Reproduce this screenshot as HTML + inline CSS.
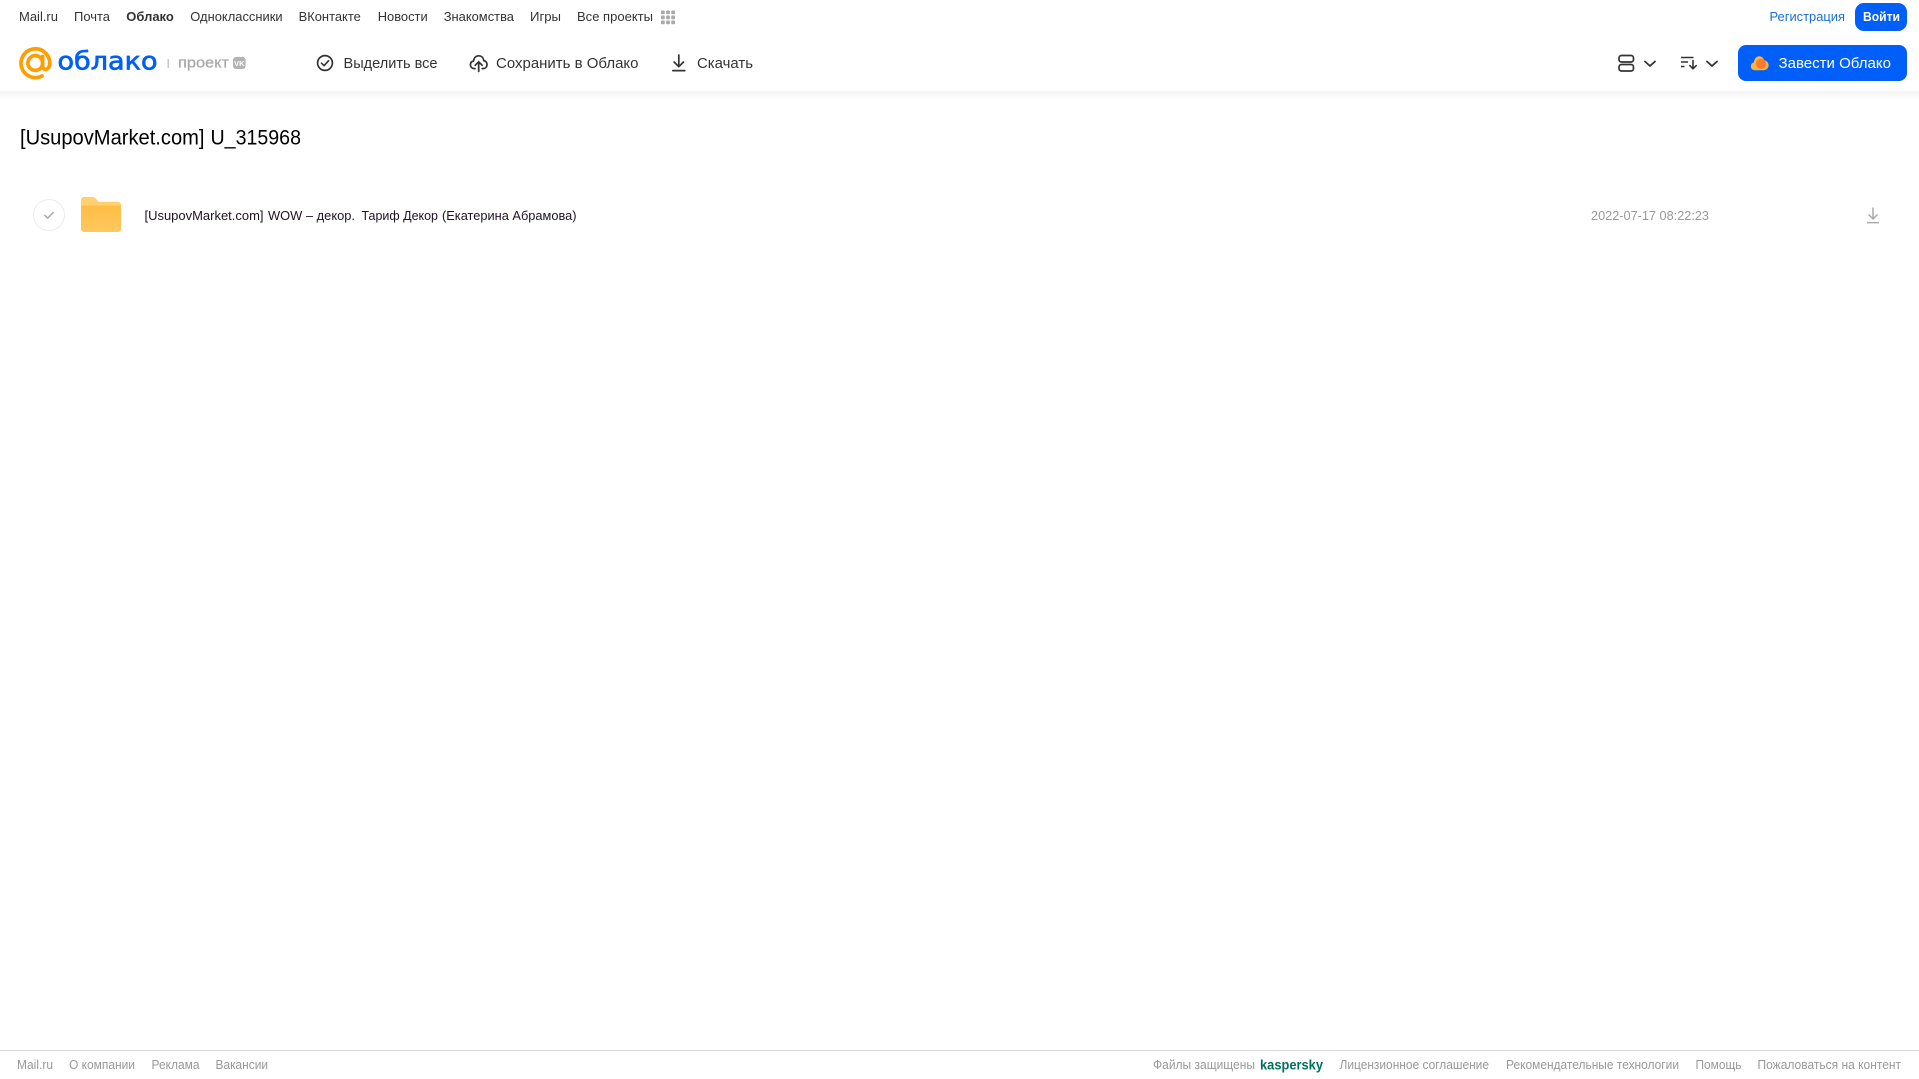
<!DOCTYPE html>
<html lang="ru">
<head>
<meta charset="utf-8">
<title>[UsupovMarket.com] U_315968</title>
<style>
html,body{margin:0;padding:0;width:1919px;height:1079px;overflow:hidden;background:#fff}
svg{display:block;position:absolute;left:0;top:0}
text{font-family:"Liberation Sans",sans-serif;white-space:pre}
.n{font-size:13px;fill:#333}
.a{font-size:15px;fill:#333}
.f{font-size:12.5px;fill:#999}
</style>
</head>
<body>
<svg width="1919" height="1079" viewBox="0 0 1919 1079" xmlns="http://www.w3.org/2000/svg">
<defs>
<linearGradient id="sh" x1="0" y1="0" x2="0" y2="1"><stop offset="0" stop-color="#f4f4f4"/><stop offset="1" stop-color="#fff"/></linearGradient>
<linearGradient id="fo" x1="0" y1="0" x2="0" y2="1"><stop offset="0" stop-color="#ffbd45"/><stop offset="1" stop-color="#ffc85f"/></linearGradient>
</defs>
<rect x="0" y="91" width="1919" height="9" fill="url(#sh)"/>

<!-- top nav -->
<text class="n" x="19" y="21" textLength="39" lengthAdjust="spacingAndGlyphs">Mail.ru</text>
<text class="n" x="74" y="21" textLength="36" lengthAdjust="spacingAndGlyphs">Почта</text>
<text class="n" x="126.3" y="21" textLength="47.5" lengthAdjust="spacingAndGlyphs" font-weight="700">Облако</text>
<text class="n" x="190.3" y="21" textLength="92.3" lengthAdjust="spacingAndGlyphs">Одноклассники</text>
<text class="n" x="298.6" y="21" textLength="62.2" lengthAdjust="spacingAndGlyphs">ВКонтакте</text>
<text class="n" x="377.7" y="21" textLength="50" lengthAdjust="spacingAndGlyphs">Новости</text>
<text class="n" x="443.7" y="21" textLength="70.3" lengthAdjust="spacingAndGlyphs">Знакомства</text>
<text class="n" x="530" y="21" textLength="31" lengthAdjust="spacingAndGlyphs">Игры</text>
<text class="n" x="577" y="21" textLength="76" lengthAdjust="spacingAndGlyphs">Все проекты</text>
<g fill="#aaa">
<rect x="661" y="10.500" width="3.800" height="3.800" rx=".8"/><rect x="666.100" y="10.500" width="3.800" height="3.800" rx=".8"/><rect x="671.200" y="10.500" width="3.800" height="3.800" rx=".8"/>
<rect x="661" y="15.500" width="3.800" height="3.800" rx=".8"/><rect x="666.100" y="15.500" width="3.800" height="3.800" rx=".8"/><rect x="671.200" y="15.500" width="3.800" height="3.800" rx=".8"/>
<rect x="661" y="20.500" width="3.800" height="3.800" rx=".8"/><rect x="666.100" y="20.500" width="3.800" height="3.800" rx=".8"/><rect x="671.200" y="20.500" width="3.800" height="3.800" rx=".8"/>
</g>
<text x="1769.500" y="21" font-size="13" fill="#1a6fd8" textLength="75.500" lengthAdjust="spacingAndGlyphs">Регистрация</text>
<rect x="1855" y="3" width="52" height="28" rx="9" fill="#005ff9"/>
<text x="1863" y="21" font-size="13" font-weight="700" fill="#fff" textLength="37" lengthAdjust="spacingAndGlyphs">Войти</text>

<!-- logo -->
<path d="M42.600 56.500v9.300c0 5.400 7.200 5 7.200-3A14.400 14.400 0 1 0 42 76" fill="none" stroke="#ff9e00" stroke-width="3.700" stroke-linecap="round"/>
<circle cx="35.300" cy="63" r="7.400" fill="none" stroke="#ff9e00" stroke-width="3.700"/>
<text x="57.500" y="69.500" font-size="24.500" style="font-family:'DejaVu Sans',sans-serif" fill="#005ff9" stroke="#005ff9" stroke-width=".7" textLength="100" lengthAdjust="spacingAndGlyphs">облако</text>
<rect x="167.600" y="59" width="1.200" height="9" fill="#bbb"/>
<text x="178" y="67.700" font-size="15" fill="#a6a6a6" stroke="#a6a6a6" stroke-width=".2" textLength="51" lengthAdjust="spacingAndGlyphs">проект</text>
<rect x="233" y="57" width="12.600" height="12" rx="3" fill="#b3b3b3"/>
<text x="239.300" y="65.800" font-size="7.500" font-weight="700" fill="#fff" text-anchor="middle">VK</text>

<!-- toolbar -->
<circle cx="325" cy="63" r="7.400" fill="none" stroke="#333" stroke-width="1.700"/>
<path d="M321.500 63.200l2.600 2.500 4.500-5" fill="none" stroke="#333" stroke-width="1.600" stroke-linecap="round" stroke-linejoin="round"/>
<text class="a" x="343.500" y="68" textLength="94" lengthAdjust="spacingAndGlyphs">Выделить все</text>

<path d="M475 68.600h-.6c-2.600 0-4-1.800-4-3.800 0-1.900 1.200-3.400 3.100-3.800.5-3.300 2.500-5.200 5.200-5.200 2.800 0 4.700 2 5.100 4.800 1.900.3 3.200 2 3.200 4 0 2.200-1.500 4-4 4h-.8" fill="none" stroke="#333" stroke-width="1.700" stroke-linecap="round" stroke-linejoin="round"/>
<path d="M478.700 71.500v-9.500M475.200 65.300l3.500-3.500 3.500 3.500" fill="none" stroke="#333" stroke-width="1.700" stroke-linecap="round" stroke-linejoin="round"/>
<text class="a" x="496" y="68" textLength="142.500" lengthAdjust="spacingAndGlyphs">Сохранить в Облако</text>

<path d="M678.800 55v11.500M674.100 62l4.700 4.700 4.700-4.700M672.800 70.600h12" fill="none" stroke="#333" stroke-width="1.700" stroke-linecap="round" stroke-linejoin="round"/>
<text class="a" x="697" y="68" textLength="56" lengthAdjust="spacingAndGlyphs">Скачать</text>

<rect x="1619" y="55.500" width="14.500" height="6.500" rx="2.500" fill="none" stroke="#333" stroke-width="1.700"/>
<rect x="1619" y="64.500" width="14.500" height="6.500" rx="2.500" fill="none" stroke="#333" stroke-width="1.700"/>
<path d="M1645 61.500l5 4.500 5-4.500" fill="none" stroke="#333" stroke-width="1.800" stroke-linecap="round" stroke-linejoin="round"/>
<path d="M1681 57.500h12.500M1681 62h7M1681 66.500h3.500" fill="none" stroke="#333" stroke-width="1.500"/>
<path d="M1693 60.500v8M1689.800 65.600l3.200 3.200 3.200-3.200" fill="none" stroke="#333" stroke-width="1.600" stroke-linecap="round" stroke-linejoin="round"/>
<path d="M1707 61.500l5 4.500 5-4.500" fill="none" stroke="#333" stroke-width="1.800" stroke-linecap="round" stroke-linejoin="round"/>

<rect x="1738" y="45" width="169" height="36" rx="8" fill="#005ff9"/>
<path d="M1755 70.200c-2.500 0-4.200-1.800-4.200-4 0-1.900 1.200-3.400 3-3.800.5-3.500 2.500-6.200 5.400-6.200 2.600 0 4.400 1.800 5 4.200 2.400.2 4.400 2.300 4.400 4.900 0 2.800-2.100 4.900-4.900 4.900z" fill="#ffb23c"/>
<circle cx="1761" cy="63.700" r="5" fill="#ff7a2f"/>
<text x="1778.500" y="68" font-size="15" fill="#fff" textLength="112.500" lengthAdjust="spacingAndGlyphs">Завести Облако</text>

<!-- title -->
<text x="20" y="144.500" font-size="21" fill="#000" textLength="184.500" lengthAdjust="spacingAndGlyphs">[UsupovMarket.com]</text>
<text x="210.500" y="144.500" font-size="21" fill="#000" textLength="90.500" lengthAdjust="spacingAndGlyphs">U_315968</text>

<!-- row -->
<circle cx="49" cy="215" r="15.500" fill="#fff" stroke="#ececec" stroke-width="1"/>
<path d="M44.800 215.300l2.900 2.800 5.500-5.600" fill="none" stroke="#a8a8a8" stroke-width="1.500" stroke-linecap="round" stroke-linejoin="round"/>
<path d="M81 200a3 3 0 0 1 3-3h8c1.800 0 3 .6 4 1.800l2.500 3h19.500a3 3 0 0 1 3 3v5h-40z" fill="#ffd06f"/>
<path d="M81 205.500h40v23.500a3 3 0 0 1-3 3h-34a3 3 0 0 1-3-3z" fill="url(#fo)"/>
<text x="144.500" y="220" font-size="13" fill="#1f1225" textLength="119" lengthAdjust="spacingAndGlyphs">[UsupovMarket.com]</text>
<text x="268" y="220" font-size="13" fill="#1f1225" textLength="87" lengthAdjust="spacingAndGlyphs">WOW – декор.</text>
<text x="361.500" y="220" font-size="13" fill="#1f1225" textLength="76.500" lengthAdjust="spacingAndGlyphs">Тариф Декор</text>
<text x="442" y="220" font-size="13" fill="#1f1225" textLength="134.500" lengthAdjust="spacingAndGlyphs">(Екатерина Абрамова)</text>
<text x="1591" y="220" font-size="13" fill="#999" textLength="118" lengthAdjust="spacingAndGlyphs">2022-07-17 08:22:23</text>
<path d="M1873 207.500v11.500M1868.500 214.500l4.500 4.500 4.500-4.500M1867 222.600h12" fill="none" stroke="#aaa" stroke-width="1.500"/>

<!-- footer -->
<rect x="0" y="1050" width="1919" height="1" fill="#ddd"/>
<text class="f" x="17" y="1069" textLength="36" lengthAdjust="spacingAndGlyphs">Mail.ru</text>
<text class="f" x="69" y="1069" textLength="66" lengthAdjust="spacingAndGlyphs">О компании</text>
<text class="f" x="151.500" y="1069" textLength="48" lengthAdjust="spacingAndGlyphs">Реклама</text>
<text class="f" x="215.500" y="1069" textLength="52.500" lengthAdjust="spacingAndGlyphs">Вакансии</text>
<text class="f" x="1153" y="1069" textLength="102" lengthAdjust="spacingAndGlyphs">Файлы защищены</text>
<text x="1260" y="1069.500" font-size="13.500" font-weight="700" fill="#00705f" textLength="63" lengthAdjust="spacingAndGlyphs">kaspersky</text>
<text class="f" x="1339.500" y="1069" textLength="149.500" lengthAdjust="spacingAndGlyphs">Лицензионное соглашение</text>
<text class="f" x="1506" y="1069" textLength="173" lengthAdjust="spacingAndGlyphs">Рекомендательные технологии</text>
<text class="f" x="1695.500" y="1069" textLength="46" lengthAdjust="spacingAndGlyphs">Помощь</text>
<text class="f" x="1757.500" y="1069" textLength="143.500" lengthAdjust="spacingAndGlyphs">Пожаловаться на контент</text>
</svg>
</body>
</html>
